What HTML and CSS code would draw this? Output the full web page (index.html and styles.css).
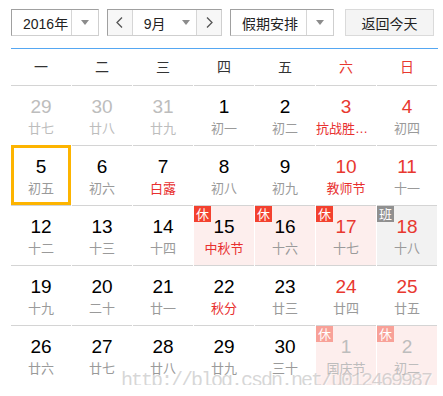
FILE: index.html
```html
<!DOCTYPE html>
<html lang="zh-CN">
<head>
    <meta charset="UTF-8">
    <meta name="viewport" content="width=device-width, initial-scale=1.0">
    <title>万年历</title>
    <link rel="stylesheet" href="styles.css">
</head>
<body>

<div class="calendar">

    <div class="toolbar">
        <div class="select year-select">
            <span class="select-text">2016年</span>
            <span class="select-arrow"><i class="caret"></i></span>
        </div>

        <div class="select month-select">
            <span class="step">
                <svg width="7" height="11" viewBox="0 0 7 11"><polyline points="6,0.5 1,5.5 6,10.5" fill="none" stroke="#555" stroke-width="1.3"/></svg>
            </span>
            <span class="select-text month-text">9月<i class="caret"></i></span>
            <span class="step">
                <svg width="7" height="11" viewBox="0 0 7 11"><polyline points="1,0.5 6,5.5 1,10.5" fill="none" stroke="#555" stroke-width="1.3"/></svg>
            </span>
        </div>

        <div class="select holiday-select">
            <span class="select-text">假期安排</span>
            <span class="select-arrow"><i class="caret"></i></span>
        </div>

        <button class="today-btn">返回今天</button>
    </div>

    <div class="week">
        <span>一</span>
        <span>二</span>
        <span>三</span>
        <span>四</span>
        <span>五</span>
        <span class="red">六</span>
        <span class="red">日</span>
    </div>

    <div class="days">
        <!-- row 1 -->
        <div class="day other"><b>29</b><em>廿七</em></div>
        <div class="day other"><b>30</b><em>廿八</em></div>
        <div class="day other"><b>31</b><em>廿九</em></div>
        <div class="day"><b>1</b><em>初一</em></div>
        <div class="day"><b>2</b><em>初二</em></div>
        <div class="day weekend"><b>3</b><em class="fest">抗战胜利纪念日</em></div>
        <div class="day weekend"><b>4</b><em>初四</em></div>

        <!-- row 2 -->
        <div class="day today"><b>5</b><em>初五</em></div>
        <div class="day"><b>6</b><em>初六</em></div>
        <div class="day"><b>7</b><em class="fest">白露</em></div>
        <div class="day"><b>8</b><em>初八</em></div>
        <div class="day"><b>9</b><em>初九</em></div>
        <div class="day weekend"><b>10</b><em class="fest">教师节</em></div>
        <div class="day weekend"><b>11</b><em>十一</em></div>

        <!-- row 3 -->
        <div class="day"><b>12</b><em>十二</em></div>
        <div class="day"><b>13</b><em>十三</em></div>
        <div class="day"><b>14</b><em>十四</em></div>
        <div class="day rest"><span class="tag">休</span><b>15</b><em class="fest">中秋节</em></div>
        <div class="day rest"><span class="tag">休</span><b>16</b><em>十六</em></div>
        <div class="day rest weekend"><span class="tag">休</span><b>17</b><em>十七</em></div>
        <div class="day work weekend"><span class="tag">班</span><b>18</b><em>十八</em></div>

        <!-- row 4 -->
        <div class="day"><b>19</b><em>十九</em></div>
        <div class="day"><b>20</b><em>二十</em></div>
        <div class="day"><b>21</b><em>廿一</em></div>
        <div class="day"><b>22</b><em class="fest">秋分</em></div>
        <div class="day"><b>23</b><em>廿三</em></div>
        <div class="day weekend"><b>24</b><em>廿四</em></div>
        <div class="day weekend"><b>25</b><em>廿五</em></div>

        <!-- row 5 -->
        <div class="day"><b>26</b><em>廿六</em></div>
        <div class="day"><b>27</b><em>廿七</em></div>
        <div class="day"><b>28</b><em>廿八</em></div>
        <div class="day"><b>29</b><em>廿九</em></div>
        <div class="day"><b>30</b><em>三十</em></div>
        <div class="day rest other"><span class="tag">休</span><b>1</b><em class="fest">国庆节</em></div>
        <div class="day rest other"><span class="tag">休</span><b>2</b><em>初二</em></div>
    </div>

    <div class="watermark">http://blog.csdn.net/u012469987</div>
</div>

</body>
</html>
```

FILE: styles.css
```css
body {
  margin: 0;
  background: #fff;
  font-family: "Liberation Sans", "Noto Sans CJK SC", sans-serif;
}

.calendar {
  position: relative;
  padding-left: 11px;
  width: 427px;
}

/* toolbar */
.toolbar {
  display: flex;
  margin-top: 9px;
  height: 27px;
}

.select {
  display: flex;
  height: 27px;
  box-sizing: border-box;
  border: 1px solid #c8c8c8;
  border-color: #a0a0a0 #cfcfcf #cfcfcf #a0a0a0;
  background: #fff;
  font-size: 14px;
  color: #222;
}

.select-text {
  display: flex;
  align-items: center;
  padding-left: 11px;
  box-sizing: border-box;
}

.select-arrow {
  display: flex;
  justify-content: center;
  align-items: center;
  width: 27px;
  border-left: 1px solid #d6d6d6;
}

.caret {
  display: inline-block;
  width: 0;
  height: 0;
  border-left: 4px solid transparent;
  border-right: 4px solid transparent;
  border-top: 5px solid #8c8c8c;
}

.year-select {
  width: 88px;
}

.year-select .select-text {
  width: 60px;
}

.month-select {
  width: 115px;
  margin-left: 8px;
}

.step {
  display: flex;
  justify-content: center;
  align-items: center;
  width: 24px;
  background: #f7f7f7;
}

.month-text {
  width: 66px;
  border-left: 1px solid #d6d6d6;
  border-right: 1px solid #d6d6d6;
}

.month-text .caret {
  margin-left: 16px;
}

.holiday-select {
  width: 104px;
  margin-left: 8px;
}

.holiday-select .select-text {
  width: 76px;
}

.today-btn {
  width: 89px;
  height: 27px;
  margin-left: 11px;
  padding: 0;
  border: 1px solid #dadada;
  background: #f4f4f4;
  font-family: "Liberation Sans", "Noto Sans CJK SC", sans-serif;
  font-size: 14px;
  color: #222;
}

/* week header */
.week {
  display: grid;
  grid-template-columns: repeat(7, 60px);
  column-gap: 1px;
  margin-top: 12px;
  border-top: 1px solid #55a7f2;
  height: 36px;
  line-height: 36px;
  text-align: center;
  font-size: 14px;
  color: #333;
}

.red {
  color: #e8382f;
}

/* days grid */
.days {
  display: grid;
  grid-template-columns: repeat(7, 60px);
  column-gap: 1px;
}

.day {
  position: relative;
  height: 60px;
  box-sizing: border-box;
  border-top: 1px solid #d4d4d4;
  padding-top: 9px;
  text-align: center;
}

.day b {
  display: block;
  font-weight: normal;
  font-size: 19px;
  line-height: 24px;
  color: #000;
}

.day em {
  display: block;
  font-style: normal;
  font-size: 13px;
  line-height: 20px;
  color: #9a9a9a;
  white-space: nowrap;
  overflow: hidden;
  text-overflow: ellipsis;
}

.day.weekend b {
  color: #e8382f;
}

.day em.fest {
  color: #e8302f;
}

.day.other b,
.day.other em {
  color: #bdbdbd;
}

.day.rest {
  background: #fdeeed;
}

.day.work {
  background: #f2f2f2;
}

.day.today {
  outline: 3px solid #fdb400;
  outline-offset: -3px;
}

.tag {
  position: absolute;
  left: 0;
  top: 0;
  width: 17px;
  height: 16px;
  line-height: 16px;
  font-size: 13px;
  color: #fff;
  background: #f3412f;
  font-family: "Noto Sans CJK SC", sans-serif;
}

.day.work .tag {
  background: #909090;
}

.day.other .tag {
  background: #f8a198;
}

.watermark {
  position: absolute;
  left: 121px;
  top: 360px;
  font-family: "Liberation Mono", monospace;
  font-size: 20px;
  letter-spacing: -2px;
  color: rgba(175, 175, 175, 0.5);
  text-shadow: 1px 1px 0 rgba(255, 255, 255, 0.6);
  white-space: nowrap;
}
```
